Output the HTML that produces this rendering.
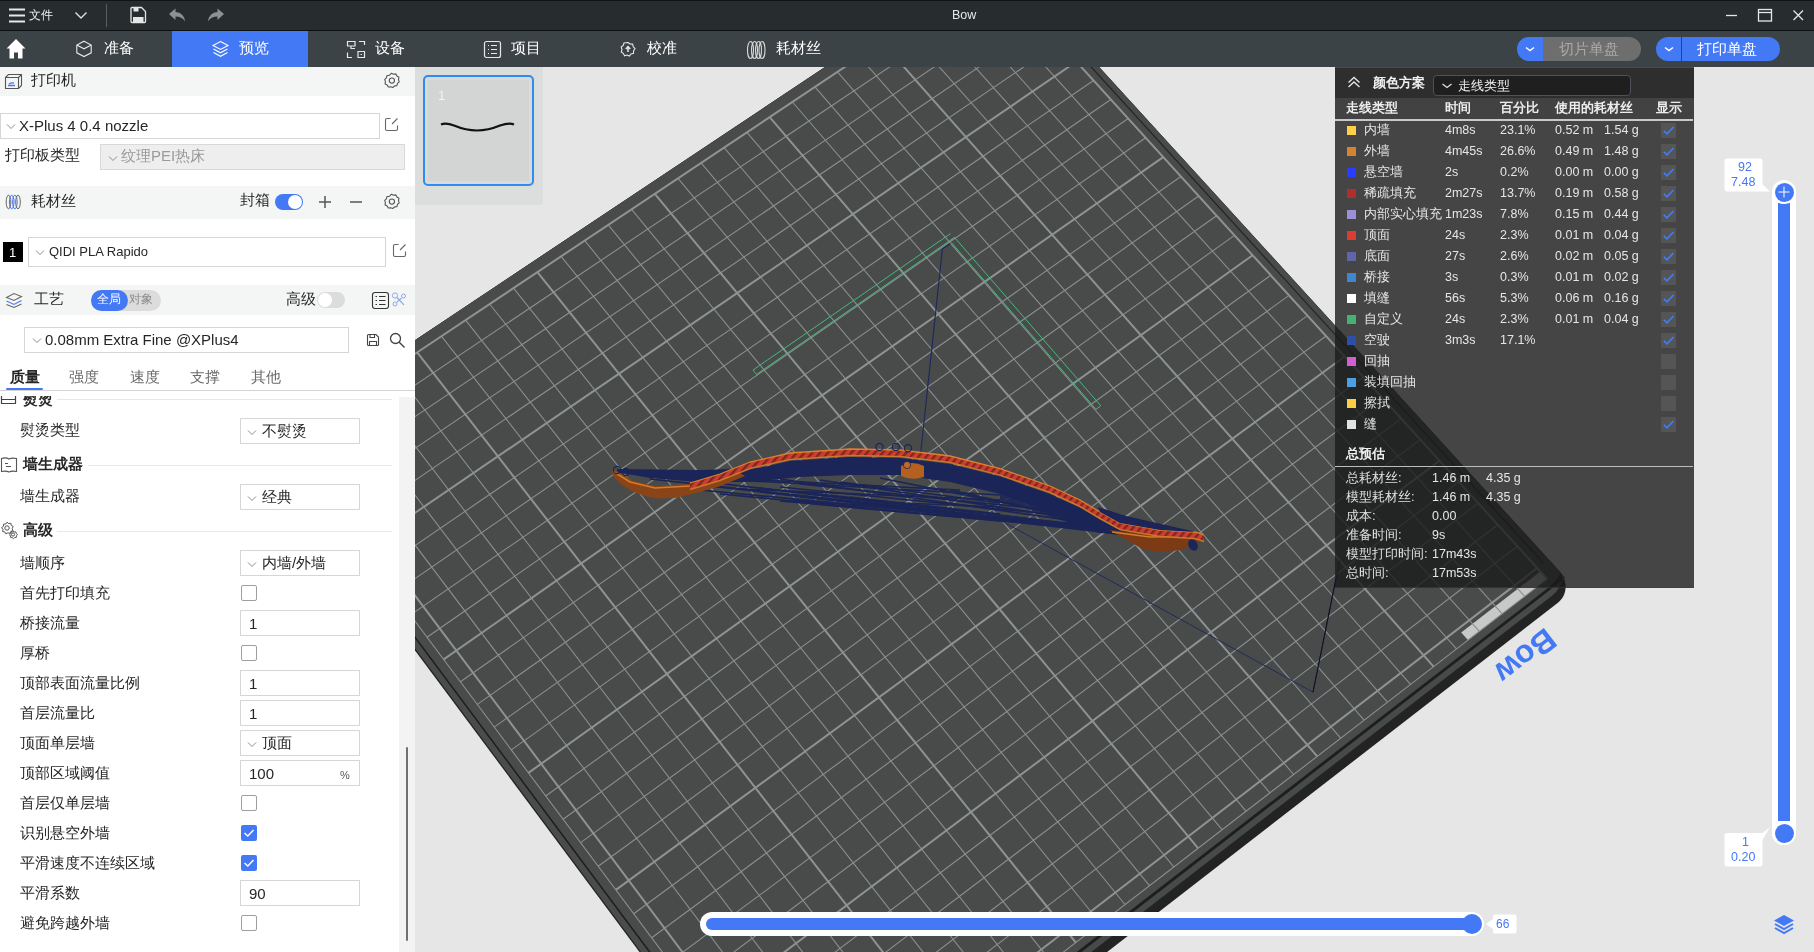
<!DOCTYPE html><html><head><meta charset="utf-8"><style>
*{box-sizing:border-box}
body{margin:0;width:1814px;height:952px;overflow:hidden;position:relative;font-family:"Liberation Sans",sans-serif;background:#e6e6e6;color:#262626}
.a{position:absolute;white-space:nowrap}
.ic{position:absolute;overflow:visible}
</style></head><body><div id="root" style="position:absolute;left:0;top:0;width:1814px;height:952px;overflow:hidden;background:#e6e6e6;will-change:transform">
<svg class="a" style="left:0;top:0" width="1814" height="952" viewBox="0 0 1814 952">
<defs><clipPath id="vc"><rect x="415" y="67" width="1399" height="885"/></clipPath></defs>
<g clip-path="url(#vc)"><polygon points="995.5,-46.5 260.6,443.0 810.5,1181.8 1557.6,603.0 1559.8,601.1 1561.7,598.8 1563.2,596.4 1564.4,593.7 1565.2,590.9 1565.6,588.0 1565.6,585.1 1565.1,582.2 1564.3,579.4 1563.1,576.6 1561.5,574.0 1559.6,571.6" fill="#232323"/>
<polygon points="266.5,439.1 261.6,442.3 805.6,1173.0 810.7,1169.1" fill="#4a4c4c"/>
<polygon points="1565.3,577.9 800.7,1168.7 804.5,1173.8 1551.4,596.2 1553.6,594.3 1555.7,592.2 1557.5,590.1 1559.1,587.8 1560.3,585.5 1561.2,583.2 1561.8,581.0 1562.0,578.8 1561.9,576.8 1561.5,574.9 1560.7,573.1 1559.6,571.6" fill="#474a4a"/>
<polygon points="995.5,-46.5 266.5,439.1 806.9,1164.0 1547.4,591.8 1549.7,590.0 1551.8,588.0 1553.8,586.0 1555.6,584.0 1557.1,582.1 1558.4,580.1 1559.4,578.3 1560.0,576.6 1560.4,575.1 1560.4,573.7 1560.2,572.6 1559.6,571.6" fill="#1e1e1e"/>
<polygon points="995.5,-46.5 267.6,438.3 806.3,1160.8 1545.6,589.8 1547.9,588.0 1550.1,586.1 1552.2,584.2 1554.0,582.3 1555.7,580.5 1557.1,578.8 1558.3,577.1 1559.1,575.7 1559.7,574.3 1560.0,573.2 1559.9,572.3 1559.6,571.6" fill="#494b4b"/>
<line x1="990.7" y1="-43.3" x2="1543.5" y2="563.2" stroke="#262626" stroke-width="1.3"/>
<polygon points="1540.4,571.5 1461.2,632.5 1467.9,640.1 1547.2,579.0" fill="#c8c8c8"/>
<path d="M970.1 -16.7L1524.7 596.3M1008.6 -12.8L297.5 463.8M948.3 -2.0L1502.0 613.7M1025.4 5.6L313.4 485.0M926.3 12.6L1479.3 631.3M1042.3 24.2L329.3 506.4M904.2 27.4L1456.5 648.9M1059.3 42.8L345.3 527.8M859.8 57.0L1410.5 684.3M1093.5 80.5L377.7 571.2M837.4 71.9L1387.4 702.2M1110.8 99.5L394.1 593.0M814.9 86.9L1364.1 720.1M1128.2 118.5L410.5 615.0M792.4 102.0L1340.7 738.2M1145.7 137.7L427.0 637.2M746.9 132.3L1293.6 774.5M1180.9 176.5L460.4 681.8M724.1 147.6L1269.9 792.8M1198.7 196.0L477.3 704.4M701.1 162.9L1246.0 811.2M1216.6 215.7L494.2 727.1M678.0 178.3L1222.1 829.7M1234.5 235.4L511.3 749.9M631.6 209.3L1173.8 866.9M1270.8 275.3L545.7 796.0M608.2 224.9L1149.5 885.7M1289.1 295.4L563.1 819.2M584.7 240.6L1125.0 904.5M1307.5 315.6L580.6 842.6M561.1 256.3L1100.5 923.5M1326.1 336.0L598.2 866.2M513.5 288.1L1051.0 961.6M1363.4 377.0L633.7 913.8M489.6 304.0L1026.1 980.9M1382.3 397.8L651.7 937.8M465.6 320.1L1001.0 1000.2M1401.2 418.6L669.7 961.9M441.4 336.2L975.8 1019.6M1420.3 439.6L687.9 986.3M392.8 368.6L925.1 1058.7M1458.8 481.9L724.6 1035.4M368.3 385.0L899.5 1078.5M1478.2 503.2L743.2 1060.2M343.7 401.4L873.8 1098.3M1497.8 524.7L761.8 1085.1M319.0 417.9L848.0 1118.2M1517.4 546.3L780.6 1110.3M281.8 442.8L809.0 1148.3M1547.2 579.0L809.0 1148.3" stroke="#8a8e8e" stroke-width="1.1" fill="none"/>
<path d="M991.9 -31.2L1547.2 579.0M991.9 -31.2L281.8 442.8M882.0 42.1L1433.6 666.6M1076.4 61.6L361.5 549.4M769.7 117.1L1317.2 756.3M1163.2 157.1L443.7 659.4M654.8 193.8L1198.0 848.2M1252.6 255.3L528.4 772.9M537.4 272.2L1075.8 942.5M1344.7 356.5L615.9 889.9M417.2 352.4L950.5 1039.1M1439.5 460.7L706.2 1010.7M294.2 434.4L822.0 1138.2M1537.2 568.0L799.5 1135.6" stroke="#8e9292" stroke-width="2" fill="none"/>
<text x="1525.5" y="667" transform="rotate(142.4 1525.5 656)" text-anchor="middle" font-family="Liberation Sans" font-weight="bold" font-size="32" fill="#4479f6">Bow</text>
<polyline points="951.5,242.7 1096.0,409.3" fill="none" stroke="#45b97c" stroke-width="1"/>
<polyline points="753.0,370.0 950.5,233.6" fill="none" stroke="#45b97c" stroke-width="1"/>
<polyline points="756.5,374.4 954.5,237.4 1100.8,405.8" fill="none" stroke="#45b97c" stroke-width="1"/>
<polyline points="753.0,370.0 756.5,374.4" fill="none" stroke="#45b97c" stroke-width="1"/><polyline points="1100.8,405.8 1096.0,409.3" fill="none" stroke="#45b97c" stroke-width="1"/>
<polyline points="950.4,243.5 942.4,249 920.7,453" fill="none" stroke="#1f2a5c" stroke-width="1.2"/>
<polyline points="1000,520 1313,692.2 1340,560" fill="none" stroke="#1f2a5c" stroke-width="1"/>
<line x1="1313" y1="692.2" x2="1336" y2="578" stroke="#111" stroke-width="1"/>
<line x1="617" y1="472" x2="1190" y2="537" stroke="#1b2557" stroke-width="1.7"/>
<line x1="650" y1="479" x2="1190" y2="538" stroke="#1b2557" stroke-width="1.7"/>
<line x1="700" y1="485" x2="1185" y2="539" stroke="#1b2557" stroke-width="1.7"/>
<line x1="760" y1="488" x2="1180" y2="540" stroke="#1b2557" stroke-width="1.7"/>
<line x1="760" y1="492" x2="1175" y2="538" stroke="#1b2557" stroke-width="1.7"/>
<line x1="700" y1="490" x2="1150" y2="533" stroke="#1b2557" stroke-width="1.7"/>
<line x1="800" y1="497" x2="1120" y2="530" stroke="#1b2557" stroke-width="1.7"/>
<line x1="780" y1="501" x2="1000" y2="521" stroke="#1b2557" stroke-width="1.7"/>
<line x1="850" y1="503" x2="1170" y2="540" stroke="#1b2557" stroke-width="1.7"/>
<line x1="720" y1="494" x2="1140" y2="534" stroke="#1b2557" stroke-width="1.7"/>
<line x1="780" y1="487" x2="1060" y2="515" stroke="#1b2557" stroke-width="1.7"/>
<line x1="820" y1="480" x2="1190" y2="536" stroke="#1b2557" stroke-width="1.7"/>
<line x1="880" y1="478" x2="1175" y2="537" stroke="#1b2557" stroke-width="1.7"/>
<line x1="800" y1="492" x2="1000" y2="514" stroke="#1b2557" stroke-width="1.7"/>
<line x1="850" y1="497" x2="1040" y2="520" stroke="#1b2557" stroke-width="1.7"/>
<line x1="900" y1="503" x2="1000" y2="507" stroke="#1b2557" stroke-width="1.7"/>
<line x1="790" y1="500" x2="1090" y2="525" stroke="#1b2557" stroke-width="1.7"/>
<line x1="740" y1="489" x2="1000" y2="500" stroke="#1b2557" stroke-width="1.7"/>
<line x1="950" y1="490" x2="1160" y2="537" stroke="#1b2557" stroke-width="1.7"/>
<line x1="700" y1="478" x2="1000" y2="495" stroke="#1b2557" stroke-width="1.7"/>
<line x1="760" y1="480" x2="960" y2="490" stroke="#1b2557" stroke-width="1.7"/>
<line x1="800" y1="484" x2="1100" y2="515" stroke="#1b2557" stroke-width="1.7"/>
<line x1="780" y1="479" x2="1180" y2="536" stroke="#1b2557" stroke-width="1.7"/>
<line x1="840" y1="482" x2="1000" y2="503" stroke="#1b2557" stroke-width="1.7"/>
<polygon points="617.0,469.0 700.0,470.0 760.0,468.0 790.0,461.0 850.0,457.0 900.0,458.0 950.0,464.0 1000.0,476.6 1050.0,494.0 1080.0,508.0 1100.0,520.0 1120.0,531.0 1160.0,538.0 1195.0,540.0 1192.0,538.0 1109.0,531.0 1080.0,529.0 1050.0,512.0 1000.0,494.0 950.0,482.0 900.0,475.0 850.0,475.0 800.0,477.0 750.0,482.0 700.0,482.0 650.0,478.0 617.0,472.0" fill="#1b2557"/>
<polygon points="1000.0,476.0 1100.0,515.0 1190.0,534.0 1190.0,540.0 1100.0,533.0 1000.0,500.0" fill="#1b2557" opacity="0.85"/>
<polygon points="612.0,470.0 616.5,470.8 633.0,480.7 655.0,486.2 688.0,484.0 710.0,478.0 735.0,470.0 745.0,476.0 720.0,486.2 699.0,492.3 677.0,497.8 658.0,498.4 646.0,496.2 633.0,491.7 622.0,485.1 613.0,476.3" fill="#8a4418"/>
<polyline points="614.0,472.0 630.0,482.0 655.0,488.0 690.0,486.0 735.0,473.0" fill="none" stroke="#d47c2c" stroke-width="1.6"/>
<polygon points="1109.0,530.0 1150.0,534.0 1199.6,533.0 1205.0,537.0 1203.5,540.0 1180.0,550.2 1157.0,551.7 1141.7,548.6" fill="#7c3a15"/>
<polyline points="1112.0,532.0 1150.0,537.0 1199.0,536.0" fill="none" stroke="#d47c2c" stroke-width="1.4"/>
<defs><pattern id="hatch" width="6" height="6" patternUnits="userSpaceOnUse" patternTransform="rotate(40)"><rect width="6" height="6" fill="#d33b2f"/><rect width="2.4" height="6" fill="#7a2a22"/></pattern></defs>
<polygon points="690.0,483.0 720.0,474.0 750.0,462.0 790.0,453.0 850.0,449.0 900.0,450.0 950.0,456.0 1000.0,468.6 1050.0,486.0 1080.0,500.0 1100.0,512.0 1120.0,523.0 1160.0,530.0 1195.0,532.0 1204.0,535.0 1204.0,541.0 1195.0,538.0 1160.0,536.0 1120.0,529.0 1100.0,518.0 1080.0,506.0 1050.0,492.0 1000.0,474.6 950.0,462.0 900.0,456.0 850.0,455.0 790.0,459.0 750.0,468.0 720.0,480.0 690.0,489.0" fill="url(#hatch)"/>
<polyline points="690.0,483.0 720.0,474.0 750.0,462.0 790.0,453.0 850.0,449.0 900.0,450.0 950.0,456.0 1000.0,468.6 1050.0,486.0 1080.0,500.0 1100.0,512.0 1120.0,523.0 1160.0,530.0 1195.0,532.0 1204.0,535.0" fill="none" stroke="#d8842e" stroke-width="1.3"/>
<polyline points="690.0,489.5 720.0,480.5 750.0,468.5 790.0,459.5 850.0,455.5 900.0,456.5 950.0,462.5 1000.0,475.1 1050.0,492.5 1080.0,506.5 1100.0,518.5 1120.0,529.5 1160.0,536.5 1195.0,538.5 1204.0,541.5" fill="none" stroke="#c9782c" stroke-width="1.5"/>
<polygon points="1098.0,507.0 1126.0,516.0 1192.0,531.0 1195.0,532.0 1160.0,530.0 1120.0,523.0 1100.0,512.0" fill="#1b2557"/>
<path d="M901,466 Q912,460 924,466 L924,477 Q912,481 901,476 Z" fill="#b5601f"/><circle cx="907" cy="465" r="3.6" fill="#c56a26" stroke="#1b2557" stroke-width="0.8"/>
<circle cx="879.5" cy="447" r="3.6" fill="none" stroke="#1b2557" stroke-width="1.2"/>
<circle cx="895.8" cy="447" r="3.6" fill="none" stroke="#1b2557" stroke-width="1.2"/>
<circle cx="908" cy="448.2" r="3.6" fill="none" stroke="#1b2557" stroke-width="1.2"/>
<circle cx="617" cy="470" r="3.6" fill="none" stroke="#1b2557" stroke-width="1.2"/>
<circle cx="626" cy="472" r="3.6" fill="none" stroke="#1b2557" stroke-width="1.2"/>
<ellipse cx="1193" cy="545" rx="4.5" ry="6" fill="#1b2557" transform="rotate(-30 1193 545)"/></g></svg>
<div class="a" style="left:415px;top:67px;width:128px;height:138px;background:#dcdddd;border-radius:0 0 4px 0"></div>
<div class="a" style="left:423px;top:75px;width:111px;height:111px;border:2px solid #2f8cf0;border-radius:5px;background:#d9dada"></div>
<div class="a" style="left:428px;top:80px;width:101px;height:101px;background:#d3d4d4"></div>
<div class="a" style="left:438px;top:89px;font-size:13px;line-height:13px;color:#f2f2f2;font-weight:normal;">1</div>
<svg class="ic" style="left:438px;top:120px;" width="80" height="16" viewBox="0 0 80 16"><path d="M3 4.5Q8 2.5 16 5.5Q28 10.5 39 10.5Q50 10.5 62 5.5Q71 2.5 76 4.5" fill="none" stroke="#111" stroke-width="2.2"/></svg>
<div class="a" style="left:0px;top:0px;width:1814px;height:31px;background:#272c2e;border-top:1px solid #101213;border-bottom:1px solid #0e0f10"></div>
<svg class="ic" style="left:8px;top:7px;" width="19" height="16" viewBox="0 0 19 16"><path d="M1 2.5H17M1 8.5H17M1 14.5H17" stroke="#e8e8e8" stroke-width="2"/></svg>
<div class="a" style="left:29px;top:9px;font-size:12px;line-height:12px;color:#f0f0f0;font-weight:normal;">文件</div>
<svg class="ic" style="left:74px;top:11px;" width="14" height="9" viewBox="0 0 14 9"><path d="M1.5 1.5L7 7L12.5 1.5" stroke="#e0e0e0" stroke-width="1.4" fill="none"/></svg>
<div class="a" style="left:106px;top:4px;width:1px;height:23px;background:#5a5e60"></div>
<svg class="ic" style="left:129px;top:6px;" width="18" height="18" viewBox="0 0 18 18"><path d="M2 2.5Q2 1.5 3 1.5H12.5L16.5 5.5V15.5Q16.5 16.5 15.5 16.5H3Q2 16.5 2 15.5Z" fill="none" stroke="#e6e6e6" stroke-width="1.3"/><rect x="4.5" y="2" width="5" height="3.5" fill="#e6e6e6"/><rect x="4" y="11" width="10.5" height="5" fill="#e6e6e6"/></svg>
<svg class="ic" style="left:168px;top:8px;" width="18" height="15" viewBox="0 0 18 15"><path d="M1 6L7.5 0.5V4Q16 4.5 17 13.5Q14 8.5 7.5 8.5V12Z" fill="#8e9192"/></svg>
<svg class="ic" style="left:207px;top:8px;" width="18" height="15" viewBox="0 0 18 15"><path d="M17 6L10.5 0.5V4Q2 4.5 1 13.5Q4 8.5 10.5 8.5V12Z" fill="#8e9192"/></svg>
<div class="a" style="left:952px;top:9px;font-size:12.5px;line-height:12.5px;color:#e8e8e8;font-weight:normal;">Bow</div>
<svg class="ic" style="left:1725px;top:10px;" width="14" height="10" viewBox="0 0 14 10"><path d="M1 5.5H12" stroke="#e6e6e6" stroke-width="1.3"/></svg>
<svg class="ic" style="left:1757px;top:8px;" width="17" height="15" viewBox="0 0 17 15"><rect x="1.5" y="1.5" width="13" height="11.5" fill="none" stroke="#e6e6e6" stroke-width="1.3"/><path d="M1.5 4.5H14.5" stroke="#e6e6e6" stroke-width="1.3"/></svg>
<svg class="ic" style="left:1792px;top:9px;" width="13" height="13" viewBox="0 0 13 13"><path d="M1.5 1.5L11 11M11 1.5L1.5 11" stroke="#e6e6e6" stroke-width="1.3"/></svg>
<div class="a" style="left:0px;top:31px;width:1814px;height:36px;background:#3c4346"></div>
<div class="a" style="left:172px;top:31px;width:136px;height:36px;background:#4479f6"></div>
<svg class="ic" style="left:5px;top:38px;" width="22" height="22" viewBox="0 0 22 22"><path d="M11 1L1.5 10.5H4.5V20.5H9V14.5H13V20.5H17.5V10.5H20.5Z" fill="#fff"/></svg>
<svg class="ic" style="left:75px;top:40px;" width="18" height="18" viewBox="0 0 18 18"><path d="M9 1.2L16.2 5V12.8L9 16.6L1.8 12.8V5Z M1.8 5L9 8.8L16.2 5" fill="none" stroke="#e8e8e8" stroke-width="1.1"/></svg>
<div class="a" style="left:104px;top:40px;font-size:15px;line-height:15px;color:#fff;font-weight:normal;">准备</div>
<svg class="ic" style="left:211px;top:40px;" width="19" height="19" viewBox="0 0 19 19"><path d="M9.5 1.5L17 5.5L9.5 9.5L2 5.5Z" fill="none" stroke="#fff" stroke-width="1.1"/><path d="M2.5 9L9.5 12.8L16.5 9M2.5 12.5L9.5 16.3L16.5 12.5" fill="none" stroke="#fff" stroke-width="1.1"/></svg>
<div class="a" style="left:239px;top:40px;font-size:15px;line-height:15px;color:#fff;font-weight:normal;">预览</div>
<svg class="ic" style="left:346px;top:40px;" width="21" height="19" viewBox="0 0 21 19"><path d="M1.5 1.5H9V6H1.5Z M5 6V8.5H9" fill="none" stroke="#e8e8e8" stroke-width="1.2"/><path d="M13 1.5H18.5V5 M1.5 12.5V17.5H6 M12 11.5H18.5V17.5H12Z M14.5 14.5H16" fill="none" stroke="#e8e8e8" stroke-width="1.2"/></svg>
<div class="a" style="left:375px;top:40px;font-size:15px;line-height:15px;color:#fff;font-weight:normal;">设备</div>
<svg class="ic" style="left:483px;top:40px;" width="20" height="19" viewBox="0 0 20 19"><rect x="1.5" y="1.5" width="16" height="16" rx="2" fill="none" stroke="#e8e8e8" stroke-width="1.2"/><path d="M5 5.5H6M8 5.5H14M5 9.5H6M8 9.5H14M5 13.5H6M8 13.5H14" stroke="#e8e8e8" stroke-width="1.2"/></svg>
<div class="a" style="left:511px;top:40px;font-size:15px;line-height:15px;color:#fff;font-weight:normal;">项目</div>
<svg class="ic" style="left:620px;top:41px;" width="16" height="16" viewBox="0 0 16 16"><path d="M8 1.5L10 3L12.6 3.1L13.2 5.6L15 7.5L13.6 9.8L13.5 12.4L11 13L9.4 15L7 14L4.6 14.8L3.4 12.5L1.3 11L2 8.5L1.2 6L3.2 4.5L4 2Z" fill="none" stroke="#e8e8e8" stroke-width="1.1"/><path d="M8 11V6M5.8 8L8 5.6L10.2 8" stroke="#e8e8e8" stroke-width="1.5" fill="none"/></svg>
<div class="a" style="left:647px;top:40px;font-size:15px;line-height:15px;color:#fff;font-weight:normal;">校准</div>
<svg class="ic" style="left:746px;top:40px;" width="21" height="20" viewBox="0 0 21 20"><ellipse cx="4.5" cy="10" rx="3" ry="8.5" fill="none" stroke="#d8d8d8" stroke-width="1.1"/><ellipse cx="8.5" cy="10" rx="3" ry="8.5" fill="none" stroke="#d8d8d8" stroke-width="1.1"/><ellipse cx="12.5" cy="10" rx="3" ry="8.5" fill="none" stroke="#d8d8d8" stroke-width="1.1"/><ellipse cx="16" cy="10" rx="3" ry="8.5" fill="none" stroke="#d8d8d8" stroke-width="1.1"/></svg>
<div class="a" style="left:776px;top:40px;font-size:15px;line-height:15px;color:#fff;font-weight:normal;">耗材丝</div>
<div class="a" style="left:1517px;top:37px;width:26px;height:24px;background:#4479f6;border-radius:12px 0 0 12px"></div>
<div class="a" style="left:1543px;top:37px;width:98px;height:24px;background:#6e6e6e;border-radius:0 12px 12px 0"></div>
<svg class="ic" style="left:1524px;top:45px;" width="12" height="8" viewBox="0 0 12 8"><path d="M2 2.5L6 5.5L10 2.5" stroke="#fff" stroke-width="1.5" fill="none"/></svg>
<div class="a" style="left:1559px;top:41px;font-size:15px;line-height:15px;color:#a9a9a9;font-weight:normal;">切片单盘</div>
<div class="a" style="left:1656px;top:37px;width:25px;height:24px;background:#4479f6;border-radius:12px 0 0 12px"></div>
<div class="a" style="left:1682px;top:37px;width:98px;height:24px;background:#4479f6;border-radius:0 12px 12px 0"></div>
<svg class="ic" style="left:1663px;top:45px;" width="12" height="8" viewBox="0 0 12 8"><path d="M2 2.5L6 5.5L10 2.5" stroke="#fff" stroke-width="1.5" fill="none"/></svg>
<div class="a" style="left:1697px;top:41px;font-size:15px;line-height:15px;color:#fff;font-weight:normal;">打印单盘</div>
<div class="a" style="left:0px;top:67px;width:415px;height:885px;background:#fff"></div>
<div class="a" style="left:0px;top:67px;width:415px;height:29px;background:#f4f5f5"></div>
<svg class="ic" style="left:4px;top:73px;" width="19" height="17" viewBox="0 0 19 17"><path d="M1.5 4.5L4.5 1.5H17.5V12.5L14.5 15.5H1.5Z M1.5 4.5H14.5V15.5 M14.5 4.5L17.5 1.5" fill="none" stroke="#555" stroke-width="1.1"/><path d="M4 12.5H11M5 11Q7 9.5 10 10" stroke="#4479f6" stroke-width="1.3" fill="none"/></svg>
<div class="a" style="left:31px;top:72px;font-size:15px;line-height:15px;color:#262626;font-weight:normal;">打印机</div>
<svg class="ic" style="left:383px;top:72px;" width="18" height="18" viewBox="0 0 18 18"><path d="M8.5 1.2L10.6 2.2L12.9 1.9L13.9 4L15.9 5.3L15.5 7.6L16.2 9.8L14.5 11.3L13.9 13.6L11.6 13.9L9.8 15.5L7.6 14.7L5.3 15L4.2 13L2.1 11.9L2.4 9.6L1.7 7.4L3.4 5.9L4 3.6L6.3 3.3Z" fill="none" stroke="#555" stroke-width="1.1" stroke-linejoin="round"/><circle cx="8.9" cy="8.6" r="2.6" fill="none" stroke="#555" stroke-width="1.1"/></svg>
<div class="a" style="left:0px;top:113px;width:380px;height:26px;border:1px solid #d6d6d6;background:#fff"></div>
<svg class="ic" style="left:6px;top:123px;" width="10" height="7" viewBox="0 0 10 7"><path d="M1 1.5L5 5.5L9 1.5" stroke="#8c8c8c" stroke-width="1" fill="none"/></svg>
<div class="a" style="left:19px;top:118px;font-size:15px;line-height:15px;color:#262626;font-weight:normal;">X-Plus 4 0.4 nozzle</div>
<svg class="ic" style="left:384px;top:117px;" width="15" height="15" viewBox="0 0 15 15"><path d="M6.5 1.5H3Q1.5 1.5 1.5 3V12Q1.5 13.5 3 13.5H12Q13.5 13.5 13.5 12V8.5 M8 7L13.5 1.5" fill="none" stroke="#666" stroke-width="1.1"/></svg>
<div class="a" style="left:5px;top:147px;font-size:15px;line-height:15px;color:#262626;font-weight:normal;">打印板类型</div>
<div class="a" style="left:100px;top:144px;width:305px;height:26px;border:1px solid #d9d9d9;background:#eeeeee"></div>
<svg class="ic" style="left:108px;top:155px;" width="10" height="7" viewBox="0 0 10 7"><path d="M1 1.5L5 5.5L9 1.5" stroke="#8c8c8c" stroke-width="1" fill="none"/></svg>
<div class="a" style="left:121px;top:148px;font-size:15px;line-height:15px;color:#9a9a9a;font-weight:normal;">纹理PEI热床</div>
<div class="a" style="left:0px;top:186px;width:415px;height:33px;background:#f4f5f5"></div>
<svg class="ic" style="left:5px;top:194px;" width="17" height="16" viewBox="0 0 17 16"><ellipse cx="3.5" cy="8" rx="2.3" ry="6.8" fill="none" stroke="#666" stroke-width="1"/><ellipse cx="6.7" cy="8" rx="2.3" ry="6.8" fill="none" stroke="#4479f6" stroke-width="1"/><ellipse cx="9.9" cy="8" rx="2.3" ry="6.8" fill="none" stroke="#4479f6" stroke-width="1"/><ellipse cx="13" cy="8" rx="2.3" ry="6.8" fill="none" stroke="#666" stroke-width="1"/></svg>
<div class="a" style="left:31px;top:193px;font-size:15px;line-height:15px;color:#262626;font-weight:normal;">耗材丝</div>
<div class="a" style="left:240px;top:192px;font-size:15px;line-height:15px;color:#262626;font-weight:normal;">封箱</div>
<div class="a" style="left:275px;top:194px;width:28px;height:16px;background:#4479f6;border-radius:8px"></div>
<div class="a" style="left:288px;top:195px;width:14px;height:14px;background:#fff;border-radius:7px"></div>
<svg class="ic" style="left:318px;top:195px;" width="14" height="14" viewBox="0 0 14 14"><path d="M7 1V13M1 7H13" stroke="#555" stroke-width="1.5"/></svg>
<svg class="ic" style="left:349px;top:195px;" width="14" height="14" viewBox="0 0 14 14"><path d="M1 7H13" stroke="#555" stroke-width="1.5"/></svg>
<svg class="ic" style="left:383px;top:193px;" width="18" height="18" viewBox="0 0 18 18"><path d="M8.5 1.2L10.6 2.2L12.9 1.9L13.9 4L15.9 5.3L15.5 7.6L16.2 9.8L14.5 11.3L13.9 13.6L11.6 13.9L9.8 15.5L7.6 14.7L5.3 15L4.2 13L2.1 11.9L2.4 9.6L1.7 7.4L3.4 5.9L4 3.6L6.3 3.3Z" fill="none" stroke="#555" stroke-width="1.1" stroke-linejoin="round"/><circle cx="8.9" cy="8.6" r="2.6" fill="none" stroke="#555" stroke-width="1.1"/></svg>
<div class="a" style="left:3px;top:242px;width:20px;height:20px;background:#000"></div>
<div class="a" style="left:9px;top:246px;font-size:13px;line-height:13px;color:#fff;font-weight:normal;">1</div>
<div class="a" style="left:28px;top:237px;width:358px;height:30px;border:1px solid #d6d6d6;background:#fff"></div>
<svg class="ic" style="left:35px;top:249px;" width="10" height="7" viewBox="0 0 10 7"><path d="M1 1.5L5 5.5L9 1.5" stroke="#8c8c8c" stroke-width="1" fill="none"/></svg>
<div class="a" style="left:49px;top:245px;font-size:13px;line-height:13px;color:#262626;font-weight:normal;">QIDI PLA Rapido</div>
<svg class="ic" style="left:392px;top:243px;" width="15" height="15" viewBox="0 0 15 15"><path d="M6.5 1.5H3Q1.5 1.5 1.5 3V12Q1.5 13.5 3 13.5H12Q13.5 13.5 13.5 12V8.5 M8 7L13.5 1.5" fill="none" stroke="#666" stroke-width="1.1"/></svg>
<div class="a" style="left:0px;top:285px;width:415px;height:30px;background:#f4f5f5"></div>
<svg class="ic" style="left:5px;top:292px;" width="18" height="16" viewBox="0 0 18 16"><path d="M1.5 5.5L9 1.5L16.5 4.5L9 8.5Z" fill="none" stroke="#666" stroke-width="1.1"/><path d="M1.5 9L9 12.5L16.5 8.5" fill="none" stroke="#4479f6" stroke-width="1.1"/><path d="M1.5 12.5L9 15.5L16.5 12" fill="none" stroke="#666" stroke-width="1.1"/></svg>
<div class="a" style="left:34px;top:291px;font-size:15px;line-height:15px;color:#262626;font-weight:normal;">工艺</div>
<div class="a" style="left:91px;top:290px;width:70px;height:21px;background:#dcdcdc;border-radius:10.5px"></div>
<div class="a" style="left:91px;top:290px;width:37px;height:21px;background:#4479f6;border-radius:10.5px"></div>
<div class="a" style="left:97px;top:293px;font-size:12px;line-height:12px;color:#fff;font-weight:normal;">全局</div>
<div class="a" style="left:129px;top:293px;font-size:12px;line-height:12px;color:#8a8a8a;font-weight:normal;">对象</div>
<div class="a" style="left:286px;top:291px;font-size:15px;line-height:15px;color:#262626;font-weight:normal;">高级</div>
<div class="a" style="left:317px;top:292px;width:28px;height:16px;background:#dcdcdc;border-radius:8px"></div>
<div class="a" style="left:318px;top:293px;width:14px;height:14px;background:#fff;border-radius:7px"></div>
<svg class="ic" style="left:371px;top:291px;" width="19" height="19" viewBox="0 0 19 19"><rect x="1.5" y="1.5" width="16" height="16" rx="2.5" fill="none" stroke="#333" stroke-width="1.1"/><path d="M4.5 5.5H6M8 5.5H14.5M4.5 9.5H6M8 9.5H14.5M4.5 13.5H6M8 13.5H14.5" stroke="#333" stroke-width="1.2"/></svg>
<svg class="ic" style="left:391px;top:291px;" width="16" height="17" viewBox="0 0 16 17"><circle cx="4" cy="4.5" r="2.6" fill="none" stroke="#8fa9ef" stroke-width="1"/><circle cx="12.5" cy="5" r="2" fill="none" stroke="#8fa9ef" stroke-width="1"/><circle cx="4" cy="13" r="2" fill="none" stroke="#8fa9ef" stroke-width="1"/><path d="M6 6.5L13 14M6 11L10.5 7" stroke="#8fa9ef" stroke-width="1.1"/></svg>
<div class="a" style="left:24px;top:327px;width:325px;height:26px;border:1px solid #d6d6d6;background:#fff"></div>
<svg class="ic" style="left:32px;top:337px;" width="10" height="7" viewBox="0 0 10 7"><path d="M1 1.5L5 5.5L9 1.5" stroke="#8c8c8c" stroke-width="1" fill="none"/></svg>
<div class="a" style="left:45px;top:332px;font-size:15px;line-height:15px;color:#262626;font-weight:normal;">0.08mm Extra Fine @XPlus4</div>
<svg class="ic" style="left:366px;top:333px;" width="14" height="14" viewBox="0 0 14 14"><path d="M1.5 2.5Q1.5 1.5 2.5 1.5H10L12.5 4V11.5Q12.5 12.5 11.5 12.5H2.5Q1.5 12.5 1.5 11.5Z M4 1.5V4.5H8.5V1.5 M3.5 12.5V8.5H10.5V12.5" fill="none" stroke="#444" stroke-width="1.1"/></svg>
<svg class="ic" style="left:389px;top:332px;" width="17" height="17" viewBox="0 0 17 17"><circle cx="6.5" cy="6.5" r="5" fill="none" stroke="#444" stroke-width="1.3"/><path d="M10 10L15.5 15.5" stroke="#444" stroke-width="1.4"/></svg>
<div class="a" style="left:10px;top:369px;font-size:15px;line-height:15px;color:#262626;font-weight:bold;">质量</div>
<div class="a" style="left:69px;top:369px;font-size:15px;line-height:15px;color:#6a6a6a;font-weight:normal;">强度</div>
<div class="a" style="left:130px;top:369px;font-size:15px;line-height:15px;color:#6a6a6a;font-weight:normal;">速度</div>
<div class="a" style="left:190px;top:369px;font-size:15px;line-height:15px;color:#6a6a6a;font-weight:normal;">支撑</div>
<div class="a" style="left:251px;top:369px;font-size:15px;line-height:15px;color:#6a6a6a;font-weight:normal;">其他</div>
<div class="a" style="left:0px;top:390px;width:415px;height:1px;background:#d4d4d4"></div>
<div class="a" style="left:6px;top:388px;width:37px;height:2px;background:#4479f6;border-radius:1px"></div>
<div class="a" style="left:0;top:396px;width:415px;height:556px;overflow:hidden">
<svg class="ic" style="left:0px;top:-7px" width="17" height="16" viewBox="0 0 17 16"><path d="M1.5 4V14.5H15.5V4M1.5 10.5H15.5" fill="none" stroke="#444" stroke-width="1.2"/></svg>
<div class="a" style="left:23px;top:-5px;font-size:15px;line-height:15px;color:#262626;font-weight:bold">熨烫</div>
<div class="a" style="left:57px;top:3px;width:335px;height:1px;background:#e8e8e8"></div>
<div class="a" style="left:20px;top:26px;font-size:15px;line-height:15px;color:#262626;font-weight:normal">熨烫类型</div>
<div class="a" style="left:240px;top:22px;width:120px;height:26px;border:1px solid #d6d6d6;background:#fff"></div>
<svg class="ic" style="left:247px;top:33px" width="10" height="7" viewBox="0 0 10 7"><path d="M1 1.5L5 5.5L9 1.5" stroke="#8c8c8c" stroke-width="1" fill="none"/></svg>
<div class="a" style="left:262px;top:27px;font-size:15px;line-height:15px;color:#262626;font-weight:normal">不熨烫</div>
<svg class="ic" style="left:0px;top:60px" width="18" height="18" viewBox="0 0 18 18"><path d="M1.5 2.5Q6 1 9 3Q12 1.5 16.5 2.5V15.5Q12 14.5 9 16Q6 14.5 1.5 15.5Z" fill="none" stroke="#555" stroke-width="1.1"/><path d="M5 7.5H8M6 10.5H11" stroke="#555" stroke-width="1"/></svg>
<div class="a" style="left:23px;top:60px;font-size:15px;line-height:15px;color:#262626;font-weight:bold">墙生成器</div>
<div class="a" style="left:88px;top:69px;width:304px;height:1px;background:#e8e8e8"></div>
<div class="a" style="left:20px;top:92px;font-size:15px;line-height:15px;color:#262626;font-weight:normal">墙生成器</div>
<div class="a" style="left:240px;top:88px;width:120px;height:26px;border:1px solid #d6d6d6;background:#fff"></div>
<svg class="ic" style="left:247px;top:99px" width="10" height="7" viewBox="0 0 10 7"><path d="M1 1.5L5 5.5L9 1.5" stroke="#8c8c8c" stroke-width="1" fill="none"/></svg>
<div class="a" style="left:262px;top:93px;font-size:15px;line-height:15px;color:#262626;font-weight:normal">经典</div>
<svg class="ic" style="left:0px;top:125px" width="19" height="19" viewBox="0 0 19 19"><circle cx="7" cy="7" r="2.2" fill="none" stroke="#555" stroke-width="1"/><path d="M7 1.2L8.6 2.6L10.8 2.2L11.3 4.4L13.2 5.5L12.2 7.5L13 9.6L10.9 10.3L10 12.4L7.9 11.8L5.9 12.9L4.8 11L2.6 10.5L3 8.3L1.6 6.6L3.4 5.3L3.6 3.1L5.8 3Z" fill="none" stroke="#555" stroke-width="1"/><circle cx="13" cy="13.5" r="1.6" fill="none" stroke="#555" stroke-width="1"/><path d="M13 10.2L14.3 11L15.9 10.9L16.2 12.5L17.5 13.5L16.4 14.8L16.3 16.4L14.7 16.5L13.5 17.7L12.3 16.7L10.7 16.6L10.6 15L9.5 13.8L10.8 12.7L11 11.1L12.4 10.9Z" fill="none" stroke="#555" stroke-width="1"/></svg>
<div class="a" style="left:23px;top:126px;font-size:15px;line-height:15px;color:#262626;font-weight:bold">高级</div>
<div class="a" style="left:57px;top:135px;width:335px;height:1px;background:#e8e8e8"></div>
<div class="a" style="left:20px;top:159px;font-size:15px;line-height:15px;color:#262626;font-weight:normal">墙顺序</div>
<div class="a" style="left:240px;top:154px;width:120px;height:26px;border:1px solid #d6d6d6;background:#fff"></div>
<svg class="ic" style="left:247px;top:165px" width="10" height="7" viewBox="0 0 10 7"><path d="M1 1.5L5 5.5L9 1.5" stroke="#8c8c8c" stroke-width="1" fill="none"/></svg>
<div class="a" style="left:262px;top:159px;font-size:15px;line-height:15px;color:#262626;font-weight:normal">内墙/外墙</div>
<div class="a" style="left:20px;top:189px;font-size:15px;line-height:15px;color:#262626;font-weight:normal">首先打印填充</div>
<div class="a" style="left:241px;top:189px;width:16px;height:16px;border:1px solid #9e9e9e;border-radius:2px;background:#fff"></div>
<div class="a" style="left:20px;top:219px;font-size:15px;line-height:15px;color:#262626;font-weight:normal">桥接流量</div>
<div class="a" style="left:240px;top:214px;width:120px;height:26px;border:1px solid #d6d6d6;background:#fff"></div>
<div class="a" style="left:249px;top:220px;font-size:15px;line-height:15px;color:#262626;font-weight:normal">1</div>
<div class="a" style="left:20px;top:249px;font-size:15px;line-height:15px;color:#262626;font-weight:normal">厚桥</div>
<div class="a" style="left:241px;top:249px;width:16px;height:16px;border:1px solid #9e9e9e;border-radius:2px;background:#fff"></div>
<div class="a" style="left:20px;top:279px;font-size:15px;line-height:15px;color:#262626;font-weight:normal">顶部表面流量比例</div>
<div class="a" style="left:240px;top:274px;width:120px;height:26px;border:1px solid #d6d6d6;background:#fff"></div>
<div class="a" style="left:249px;top:280px;font-size:15px;line-height:15px;color:#262626;font-weight:normal">1</div>
<div class="a" style="left:20px;top:309px;font-size:15px;line-height:15px;color:#262626;font-weight:normal">首层流量比</div>
<div class="a" style="left:240px;top:304px;width:120px;height:26px;border:1px solid #d6d6d6;background:#fff"></div>
<div class="a" style="left:249px;top:310px;font-size:15px;line-height:15px;color:#262626;font-weight:normal">1</div>
<div class="a" style="left:20px;top:339px;font-size:15px;line-height:15px;color:#262626;font-weight:normal">顶面单层墙</div>
<div class="a" style="left:240px;top:334px;width:120px;height:26px;border:1px solid #d6d6d6;background:#fff"></div>
<svg class="ic" style="left:247px;top:345px" width="10" height="7" viewBox="0 0 10 7"><path d="M1 1.5L5 5.5L9 1.5" stroke="#8c8c8c" stroke-width="1" fill="none"/></svg>
<div class="a" style="left:262px;top:339px;font-size:15px;line-height:15px;color:#262626;font-weight:normal">顶面</div>
<div class="a" style="left:20px;top:369px;font-size:15px;line-height:15px;color:#262626;font-weight:normal">顶部区域阈值</div>
<div class="a" style="left:240px;top:364px;width:120px;height:26px;border:1px solid #d6d6d6;background:#fff"></div>
<div class="a" style="left:249px;top:370px;font-size:15px;line-height:15px;color:#262626;font-weight:normal">100</div>
<div class="a" style="left:340px;top:374px;font-size:11px;line-height:11px;color:#555;font-weight:normal">%</div>
<div class="a" style="left:20px;top:399px;font-size:15px;line-height:15px;color:#262626;font-weight:normal">首层仅单层墙</div>
<div class="a" style="left:241px;top:399px;width:16px;height:16px;border:1px solid #9e9e9e;border-radius:2px;background:#fff"></div>
<div class="a" style="left:20px;top:429px;font-size:15px;line-height:15px;color:#262626;font-weight:normal">识别悬空外墙</div>
<div class="a" style="left:241px;top:429px;width:16px;height:16px;background:#4479f6;border-radius:2px"></div>
<svg class="ic" style="left:241px;top:429px" width="16" height="16" viewBox="0 0 16 16"><path d="M3.5 8L6.8 11L12.5 5" stroke="#fff" stroke-width="1.4" fill="none"/></svg>
<div class="a" style="left:20px;top:459px;font-size:15px;line-height:15px;color:#262626;font-weight:normal">平滑速度不连续区域</div>
<div class="a" style="left:241px;top:459px;width:16px;height:16px;background:#4479f6;border-radius:2px"></div>
<svg class="ic" style="left:241px;top:459px" width="16" height="16" viewBox="0 0 16 16"><path d="M3.5 8L6.8 11L12.5 5" stroke="#fff" stroke-width="1.4" fill="none"/></svg>
<div class="a" style="left:20px;top:489px;font-size:15px;line-height:15px;color:#262626;font-weight:normal">平滑系数</div>
<div class="a" style="left:240px;top:484px;width:120px;height:26px;border:1px solid #d6d6d6;background:#fff"></div>
<div class="a" style="left:249px;top:490px;font-size:15px;line-height:15px;color:#262626;font-weight:normal">90</div>
<div class="a" style="left:20px;top:519px;font-size:15px;line-height:15px;color:#262626;font-weight:normal">避免跨越外墙</div>
<div class="a" style="left:241px;top:519px;width:16px;height:16px;border:1px solid #9e9e9e;border-radius:2px;background:#fff"></div>
<div class="a" style="left:399px;top:1px;width:16px;height:555px;background:#f3f3f3"></div>
<div class="a" style="left:406px;top:351px;width:2px;height:194px;background:#707070;border-radius:1px"></div>
</div>
<div class="a" style="left:1335px;top:67px;width:359px;height:521px;background:rgba(25,25,25,0.79)"></div>
<div class="a" style="left:1335px;top:587px;width:359px;height:1px;background:rgba(60,58,80,0.6)"></div>
<div class="a" style="left:1335px;top:67px;width:359px;height:31px;background:#2e2e2e"></div>
<div class="a" style="left:1335px;top:98px;width:359px;height:21px;background:#424242"></div>
<div class="a" style="left:1335px;top:67px;width:359px;height:1px;background:#4c4b55"></div>
<svg class="ic" style="left:1347px;top:76px;" width="15" height="12" viewBox="0 0 15 12"><path d="M1.5 6.5L7 1.5L12.5 6.5M1.5 11L7 6L12.5 11" stroke="#e6e6e6" stroke-width="1.3" fill="none"/></svg>
<div class="a" style="left:1373px;top:76px;font-size:13px;line-height:13px;color:#f0f0f0;font-weight:bold;">颜色方案</div>
<div class="a" style="left:1433px;top:75px;width:198px;height:21px;background:#1f1f1f;border:1px solid #50505a;border-radius:4px"></div>
<svg class="ic" style="left:1441px;top:82px;" width="12" height="8" viewBox="0 0 12 8"><path d="M1.5 2L6 5.5L10.5 2" stroke="#e6e6e6" stroke-width="1.2" fill="none"/></svg>
<div class="a" style="left:1458px;top:79px;font-size:13px;line-height:13px;color:#f0f0f0;font-weight:normal;">走线类型</div>
<div class="a" style="left:1346px;top:101px;font-size:13px;line-height:13px;color:#ececec;font-weight:bold;">走线类型</div>
<div class="a" style="left:1445px;top:101px;font-size:13px;line-height:13px;color:#ececec;font-weight:bold;">时间</div>
<div class="a" style="left:1500px;top:101px;font-size:13px;line-height:13px;color:#ececec;font-weight:bold;">百分比</div>
<div class="a" style="left:1555px;top:101px;font-size:13px;line-height:13px;color:#ececec;font-weight:bold;">使用的耗材丝</div>
<div class="a" style="left:1656px;top:101px;font-size:13px;line-height:13px;color:#ececec;font-weight:bold;">显示</div>
<div class="a" style="left:1335px;top:119px;width:358px;height:2px;background:#c9c9c9"></div>
<div class="a" style="left:1347px;top:126px;width:9px;height:9px;background:#ffcf48"></div>
<div class="a" style="left:1364px;top:123px;font-size:13px;line-height:13px;color:#e6e6e6;font-weight:normal;">内墙</div>
<div class="a" style="left:1445px;top:124px;font-size:12.5px;line-height:12.5px;color:#e6e6e6;font-weight:normal;">4m8s</div>
<div class="a" style="left:1500px;top:124px;font-size:12.5px;line-height:12.5px;color:#e6e6e6;font-weight:normal;">23.1%</div>
<div class="a" style="left:1555px;top:124px;font-size:12.5px;line-height:12.5px;color:#e6e6e6;font-weight:normal;">0.52 m</div>
<div class="a" style="left:1604px;top:124px;font-size:12.5px;line-height:12.5px;color:#e6e6e6;font-weight:normal;">1.54 g</div>
<div class="a" style="left:1661px;top:123px;width:15px;height:15px;background:#555555"></div>
<svg class="ic" style="left:1661px;top:123px;" width="15" height="15" viewBox="0 0 15 15"><path d="M2.8 7.8L6 10.8L12.5 4" stroke="#3f7cf6" stroke-width="1.8" fill="none"/></svg>
<div class="a" style="left:1347px;top:147px;width:9px;height:9px;background:#d6832f"></div>
<div class="a" style="left:1364px;top:144px;font-size:13px;line-height:13px;color:#e6e6e6;font-weight:normal;">外墙</div>
<div class="a" style="left:1445px;top:145px;font-size:12.5px;line-height:12.5px;color:#e6e6e6;font-weight:normal;">4m45s</div>
<div class="a" style="left:1500px;top:145px;font-size:12.5px;line-height:12.5px;color:#e6e6e6;font-weight:normal;">26.6%</div>
<div class="a" style="left:1555px;top:145px;font-size:12.5px;line-height:12.5px;color:#e6e6e6;font-weight:normal;">0.49 m</div>
<div class="a" style="left:1604px;top:145px;font-size:12.5px;line-height:12.5px;color:#e6e6e6;font-weight:normal;">1.48 g</div>
<div class="a" style="left:1661px;top:144px;width:15px;height:15px;background:#555555"></div>
<svg class="ic" style="left:1661px;top:144px;" width="15" height="15" viewBox="0 0 15 15"><path d="M2.8 7.8L6 10.8L12.5 4" stroke="#3f7cf6" stroke-width="1.8" fill="none"/></svg>
<div class="a" style="left:1347px;top:168px;width:9px;height:9px;background:#2a3dff"></div>
<div class="a" style="left:1364px;top:165px;font-size:13px;line-height:13px;color:#e6e6e6;font-weight:normal;">悬空墙</div>
<div class="a" style="left:1445px;top:166px;font-size:12.5px;line-height:12.5px;color:#e6e6e6;font-weight:normal;">2s</div>
<div class="a" style="left:1500px;top:166px;font-size:12.5px;line-height:12.5px;color:#e6e6e6;font-weight:normal;">0.2%</div>
<div class="a" style="left:1555px;top:166px;font-size:12.5px;line-height:12.5px;color:#e6e6e6;font-weight:normal;">0.00 m</div>
<div class="a" style="left:1604px;top:166px;font-size:12.5px;line-height:12.5px;color:#e6e6e6;font-weight:normal;">0.00 g</div>
<div class="a" style="left:1661px;top:165px;width:15px;height:15px;background:#555555"></div>
<svg class="ic" style="left:1661px;top:165px;" width="15" height="15" viewBox="0 0 15 15"><path d="M2.8 7.8L6 10.8L12.5 4" stroke="#3f7cf6" stroke-width="1.8" fill="none"/></svg>
<div class="a" style="left:1347px;top:189px;width:9px;height:9px;background:#b02e2e"></div>
<div class="a" style="left:1364px;top:186px;font-size:13px;line-height:13px;color:#e6e6e6;font-weight:normal;">稀疏填充</div>
<div class="a" style="left:1445px;top:187px;font-size:12.5px;line-height:12.5px;color:#e6e6e6;font-weight:normal;">2m27s</div>
<div class="a" style="left:1500px;top:187px;font-size:12.5px;line-height:12.5px;color:#e6e6e6;font-weight:normal;">13.7%</div>
<div class="a" style="left:1555px;top:187px;font-size:12.5px;line-height:12.5px;color:#e6e6e6;font-weight:normal;">0.19 m</div>
<div class="a" style="left:1604px;top:187px;font-size:12.5px;line-height:12.5px;color:#e6e6e6;font-weight:normal;">0.58 g</div>
<div class="a" style="left:1661px;top:186px;width:15px;height:15px;background:#555555"></div>
<svg class="ic" style="left:1661px;top:186px;" width="15" height="15" viewBox="0 0 15 15"><path d="M2.8 7.8L6 10.8L12.5 4" stroke="#3f7cf6" stroke-width="1.8" fill="none"/></svg>
<div class="a" style="left:1347px;top:210px;width:9px;height:9px;background:#9b8fd8"></div>
<div class="a" style="left:1364px;top:207px;font-size:13px;line-height:13px;color:#e6e6e6;font-weight:normal;">内部实心填充</div>
<div class="a" style="left:1445px;top:208px;font-size:12.5px;line-height:12.5px;color:#e6e6e6;font-weight:normal;">1m23s</div>
<div class="a" style="left:1500px;top:208px;font-size:12.5px;line-height:12.5px;color:#e6e6e6;font-weight:normal;">7.8%</div>
<div class="a" style="left:1555px;top:208px;font-size:12.5px;line-height:12.5px;color:#e6e6e6;font-weight:normal;">0.15 m</div>
<div class="a" style="left:1604px;top:208px;font-size:12.5px;line-height:12.5px;color:#e6e6e6;font-weight:normal;">0.44 g</div>
<div class="a" style="left:1661px;top:207px;width:15px;height:15px;background:#555555"></div>
<svg class="ic" style="left:1661px;top:207px;" width="15" height="15" viewBox="0 0 15 15"><path d="M2.8 7.8L6 10.8L12.5 4" stroke="#3f7cf6" stroke-width="1.8" fill="none"/></svg>
<div class="a" style="left:1347px;top:231px;width:9px;height:9px;background:#dc3b30"></div>
<div class="a" style="left:1364px;top:228px;font-size:13px;line-height:13px;color:#e6e6e6;font-weight:normal;">顶面</div>
<div class="a" style="left:1445px;top:229px;font-size:12.5px;line-height:12.5px;color:#e6e6e6;font-weight:normal;">24s</div>
<div class="a" style="left:1500px;top:229px;font-size:12.5px;line-height:12.5px;color:#e6e6e6;font-weight:normal;">2.3%</div>
<div class="a" style="left:1555px;top:229px;font-size:12.5px;line-height:12.5px;color:#e6e6e6;font-weight:normal;">0.01 m</div>
<div class="a" style="left:1604px;top:229px;font-size:12.5px;line-height:12.5px;color:#e6e6e6;font-weight:normal;">0.04 g</div>
<div class="a" style="left:1661px;top:228px;width:15px;height:15px;background:#555555"></div>
<svg class="ic" style="left:1661px;top:228px;" width="15" height="15" viewBox="0 0 15 15"><path d="M2.8 7.8L6 10.8L12.5 4" stroke="#3f7cf6" stroke-width="1.8" fill="none"/></svg>
<div class="a" style="left:1347px;top:252px;width:9px;height:9px;background:#6064a9"></div>
<div class="a" style="left:1364px;top:249px;font-size:13px;line-height:13px;color:#e6e6e6;font-weight:normal;">底面</div>
<div class="a" style="left:1445px;top:250px;font-size:12.5px;line-height:12.5px;color:#e6e6e6;font-weight:normal;">27s</div>
<div class="a" style="left:1500px;top:250px;font-size:12.5px;line-height:12.5px;color:#e6e6e6;font-weight:normal;">2.6%</div>
<div class="a" style="left:1555px;top:250px;font-size:12.5px;line-height:12.5px;color:#e6e6e6;font-weight:normal;">0.02 m</div>
<div class="a" style="left:1604px;top:250px;font-size:12.5px;line-height:12.5px;color:#e6e6e6;font-weight:normal;">0.05 g</div>
<div class="a" style="left:1661px;top:249px;width:15px;height:15px;background:#555555"></div>
<svg class="ic" style="left:1661px;top:249px;" width="15" height="15" viewBox="0 0 15 15"><path d="M2.8 7.8L6 10.8L12.5 4" stroke="#3f7cf6" stroke-width="1.8" fill="none"/></svg>
<div class="a" style="left:1347px;top:273px;width:9px;height:9px;background:#3e86d2"></div>
<div class="a" style="left:1364px;top:270px;font-size:13px;line-height:13px;color:#e6e6e6;font-weight:normal;">桥接</div>
<div class="a" style="left:1445px;top:271px;font-size:12.5px;line-height:12.5px;color:#e6e6e6;font-weight:normal;">3s</div>
<div class="a" style="left:1500px;top:271px;font-size:12.5px;line-height:12.5px;color:#e6e6e6;font-weight:normal;">0.3%</div>
<div class="a" style="left:1555px;top:271px;font-size:12.5px;line-height:12.5px;color:#e6e6e6;font-weight:normal;">0.01 m</div>
<div class="a" style="left:1604px;top:271px;font-size:12.5px;line-height:12.5px;color:#e6e6e6;font-weight:normal;">0.02 g</div>
<div class="a" style="left:1661px;top:270px;width:15px;height:15px;background:#555555"></div>
<svg class="ic" style="left:1661px;top:270px;" width="15" height="15" viewBox="0 0 15 15"><path d="M2.8 7.8L6 10.8L12.5 4" stroke="#3f7cf6" stroke-width="1.8" fill="none"/></svg>
<div class="a" style="left:1347px;top:294px;width:9px;height:9px;background:#ffffff"></div>
<div class="a" style="left:1364px;top:291px;font-size:13px;line-height:13px;color:#e6e6e6;font-weight:normal;">填缝</div>
<div class="a" style="left:1445px;top:292px;font-size:12.5px;line-height:12.5px;color:#e6e6e6;font-weight:normal;">56s</div>
<div class="a" style="left:1500px;top:292px;font-size:12.5px;line-height:12.5px;color:#e6e6e6;font-weight:normal;">5.3%</div>
<div class="a" style="left:1555px;top:292px;font-size:12.5px;line-height:12.5px;color:#e6e6e6;font-weight:normal;">0.06 m</div>
<div class="a" style="left:1604px;top:292px;font-size:12.5px;line-height:12.5px;color:#e6e6e6;font-weight:normal;">0.16 g</div>
<div class="a" style="left:1661px;top:291px;width:15px;height:15px;background:#555555"></div>
<svg class="ic" style="left:1661px;top:291px;" width="15" height="15" viewBox="0 0 15 15"><path d="M2.8 7.8L6 10.8L12.5 4" stroke="#3f7cf6" stroke-width="1.8" fill="none"/></svg>
<div class="a" style="left:1347px;top:315px;width:9px;height:9px;background:#48b172"></div>
<div class="a" style="left:1364px;top:312px;font-size:13px;line-height:13px;color:#e6e6e6;font-weight:normal;">自定义</div>
<div class="a" style="left:1445px;top:313px;font-size:12.5px;line-height:12.5px;color:#e6e6e6;font-weight:normal;">24s</div>
<div class="a" style="left:1500px;top:313px;font-size:12.5px;line-height:12.5px;color:#e6e6e6;font-weight:normal;">2.3%</div>
<div class="a" style="left:1555px;top:313px;font-size:12.5px;line-height:12.5px;color:#e6e6e6;font-weight:normal;">0.01 m</div>
<div class="a" style="left:1604px;top:313px;font-size:12.5px;line-height:12.5px;color:#e6e6e6;font-weight:normal;">0.04 g</div>
<div class="a" style="left:1661px;top:312px;width:15px;height:15px;background:#555555"></div>
<svg class="ic" style="left:1661px;top:312px;" width="15" height="15" viewBox="0 0 15 15"><path d="M2.8 7.8L6 10.8L12.5 4" stroke="#3f7cf6" stroke-width="1.8" fill="none"/></svg>
<div class="a" style="left:1347px;top:336px;width:9px;height:9px;background:#2c50a8"></div>
<div class="a" style="left:1364px;top:333px;font-size:13px;line-height:13px;color:#e6e6e6;font-weight:normal;">空驶</div>
<div class="a" style="left:1445px;top:334px;font-size:12.5px;line-height:12.5px;color:#e6e6e6;font-weight:normal;">3m3s</div>
<div class="a" style="left:1500px;top:334px;font-size:12.5px;line-height:12.5px;color:#e6e6e6;font-weight:normal;">17.1%</div>
<div class="a" style="left:1661px;top:333px;width:15px;height:15px;background:#555555"></div>
<svg class="ic" style="left:1661px;top:333px;" width="15" height="15" viewBox="0 0 15 15"><path d="M2.8 7.8L6 10.8L12.5 4" stroke="#3f7cf6" stroke-width="1.8" fill="none"/></svg>
<div class="a" style="left:1347px;top:357px;width:9px;height:9px;background:#d060d0"></div>
<div class="a" style="left:1364px;top:354px;font-size:13px;line-height:13px;color:#e6e6e6;font-weight:normal;">回抽</div>
<div class="a" style="left:1661px;top:354px;width:15px;height:15px;background:#555555"></div>
<div class="a" style="left:1347px;top:378px;width:9px;height:9px;background:#4ca0e2"></div>
<div class="a" style="left:1364px;top:375px;font-size:13px;line-height:13px;color:#e6e6e6;font-weight:normal;">装填回抽</div>
<div class="a" style="left:1661px;top:375px;width:15px;height:15px;background:#555555"></div>
<div class="a" style="left:1347px;top:399px;width:9px;height:9px;background:#ffcc46"></div>
<div class="a" style="left:1364px;top:396px;font-size:13px;line-height:13px;color:#e6e6e6;font-weight:normal;">擦拭</div>
<div class="a" style="left:1661px;top:396px;width:15px;height:15px;background:#555555"></div>
<div class="a" style="left:1347px;top:420px;width:9px;height:9px;background:#e2e2e2"></div>
<div class="a" style="left:1364px;top:417px;font-size:13px;line-height:13px;color:#e6e6e6;font-weight:normal;">缝</div>
<div class="a" style="left:1661px;top:417px;width:15px;height:15px;background:#555555"></div>
<svg class="ic" style="left:1661px;top:417px;" width="15" height="15" viewBox="0 0 15 15"><path d="M2.8 7.8L6 10.8L12.5 4" stroke="#3f7cf6" stroke-width="1.8" fill="none"/></svg>
<div class="a" style="left:1346px;top:447px;font-size:13px;line-height:13px;color:#f0f0f0;font-weight:bold;">总预估</div>
<div class="a" style="left:1335px;top:466px;width:358px;height:1px;background:#bdbdbd"></div>
<div class="a" style="left:1346px;top:471px;font-size:13px;line-height:13px;color:#e0e0e0;font-weight:normal;">总耗材丝:</div>
<div class="a" style="left:1432px;top:472px;font-size:12.5px;line-height:12.5px;color:#e6e6e6;font-weight:normal;">1.46 m</div>
<div class="a" style="left:1486px;top:472px;font-size:12.5px;line-height:12.5px;color:#e6e6e6;font-weight:normal;">4.35 g</div>
<div class="a" style="left:1346px;top:490px;font-size:13px;line-height:13px;color:#e0e0e0;font-weight:normal;">模型耗材丝:</div>
<div class="a" style="left:1432px;top:491px;font-size:12.5px;line-height:12.5px;color:#e6e6e6;font-weight:normal;">1.46 m</div>
<div class="a" style="left:1486px;top:491px;font-size:12.5px;line-height:12.5px;color:#e6e6e6;font-weight:normal;">4.35 g</div>
<div class="a" style="left:1346px;top:509px;font-size:13px;line-height:13px;color:#e0e0e0;font-weight:normal;">成本:</div>
<div class="a" style="left:1432px;top:510px;font-size:12.5px;line-height:12.5px;color:#e6e6e6;font-weight:normal;">0.00</div>
<div class="a" style="left:1346px;top:528px;font-size:13px;line-height:13px;color:#e0e0e0;font-weight:normal;">准备时间:</div>
<div class="a" style="left:1432px;top:529px;font-size:12.5px;line-height:12.5px;color:#e6e6e6;font-weight:normal;">9s</div>
<div class="a" style="left:1346px;top:547px;font-size:13px;line-height:13px;color:#e0e0e0;font-weight:normal;">模型打印时间:</div>
<div class="a" style="left:1432px;top:548px;font-size:12.5px;line-height:12.5px;color:#e6e6e6;font-weight:normal;">17m43s</div>
<div class="a" style="left:1346px;top:566px;font-size:13px;line-height:13px;color:#e0e0e0;font-weight:normal;">总时间:</div>
<div class="a" style="left:1432px;top:567px;font-size:12.5px;line-height:12.5px;color:#e6e6e6;font-weight:normal;">17m53s</div>
<div class="a" style="left:1772px;top:181px;width:24px;height:664px;background:#fff;border-radius:12px"></div>
<div class="a" style="left:1778px;top:203px;width:12px;height:618px;background:#4479f6"></div>
<div class="a" style="left:1772px;top:180px;width:24px;height:24px;border-radius:12px;background:#fff"></div>
<div class="a" style="left:1774.5px;top:182.5px;width:19px;height:19px;border-radius:10px;background:#4479f6"></div>
<svg class="ic" style="left:1774px;top:182px;" width="20" height="20" viewBox="0 0 20 20"><path d="M10 4.5V15.5M4.5 10H15.5" stroke="#fff" stroke-width="1"/></svg>
<div class="a" style="left:1772px;top:821px;width:24px;height:24px;border-radius:12px;background:#fff"></div>
<div class="a" style="left:1774.5px;top:823.5px;width:19px;height:19px;border-radius:10px;background:#4479f6"></div>
<svg class="ic" style="left:1724px;top:158px;" width="50" height="45" viewBox="0 0 50 45"><path d="M3 0.5H36Q38.5 0.5 38.5 3V26L46 33.5H3Q0.5 33.5 0.5 31V3Q0.5 0.5 3 0.5Z" fill="#fff"/></svg>
<div class="a" style="left:1738px;top:161px;font-size:12.5px;line-height:12.5px;color:#4479f6;font-weight:normal;">92</div>
<div class="a" style="left:1731px;top:176px;font-size:12.5px;line-height:12.5px;color:#4479f6;font-weight:normal;">7.48</div>
<svg class="ic" style="left:1724px;top:822px;" width="50" height="45" viewBox="0 0 50 45"><path d="M3 11H38.5L46 5L38.5 18V42Q38.5 44.5 36 44.5H3Q0.5 44.5 0.5 42V13.5Q0.5 11 3 11Z" fill="#fff"/></svg>
<div class="a" style="left:1742px;top:836px;font-size:12.5px;line-height:12.5px;color:#4479f6;font-weight:normal;">1</div>
<div class="a" style="left:1731px;top:851px;font-size:12.5px;line-height:12.5px;color:#4479f6;font-weight:normal;">0.20</div>
<div class="a" style="left:700px;top:912px;width:784px;height:24px;background:#fff;border-radius:12px"></div>
<div class="a" style="left:706px;top:918px;width:766px;height:12px;background:#4479f6;border-radius:6px 0 0 6px"></div>
<div class="a" style="left:1462px;top:914px;width:20px;height:20px;background:#4479f6;border-radius:10px"></div>
<svg class="ic" style="left:1485px;top:914px;" width="32" height="20" viewBox="0 0 32 20"><path d="M1 10L8 5V2Q8 0.5 9.5 0.5H29.5Q31.5 0.5 31.5 2.5V17.5Q31.5 19.5 29.5 19.5H9.5Q8 19.5 8 18V15Z" fill="#fff"/></svg>
<div class="a" style="left:1496px;top:918px;font-size:12px;line-height:12px;color:#4479f6;font-weight:normal;">66</div>
<svg class="ic" style="left:1772px;top:913px;" width="24" height="24" viewBox="0 0 24 24"><path d="M12 2L22 7.5L12 13L2 7.5Z" fill="#4479f6"/><path d="M3 11L12 16L21 11M3 15L12 20L21 15" stroke="#4479f6" stroke-width="2" fill="none"/></svg>
</div></body></html>
